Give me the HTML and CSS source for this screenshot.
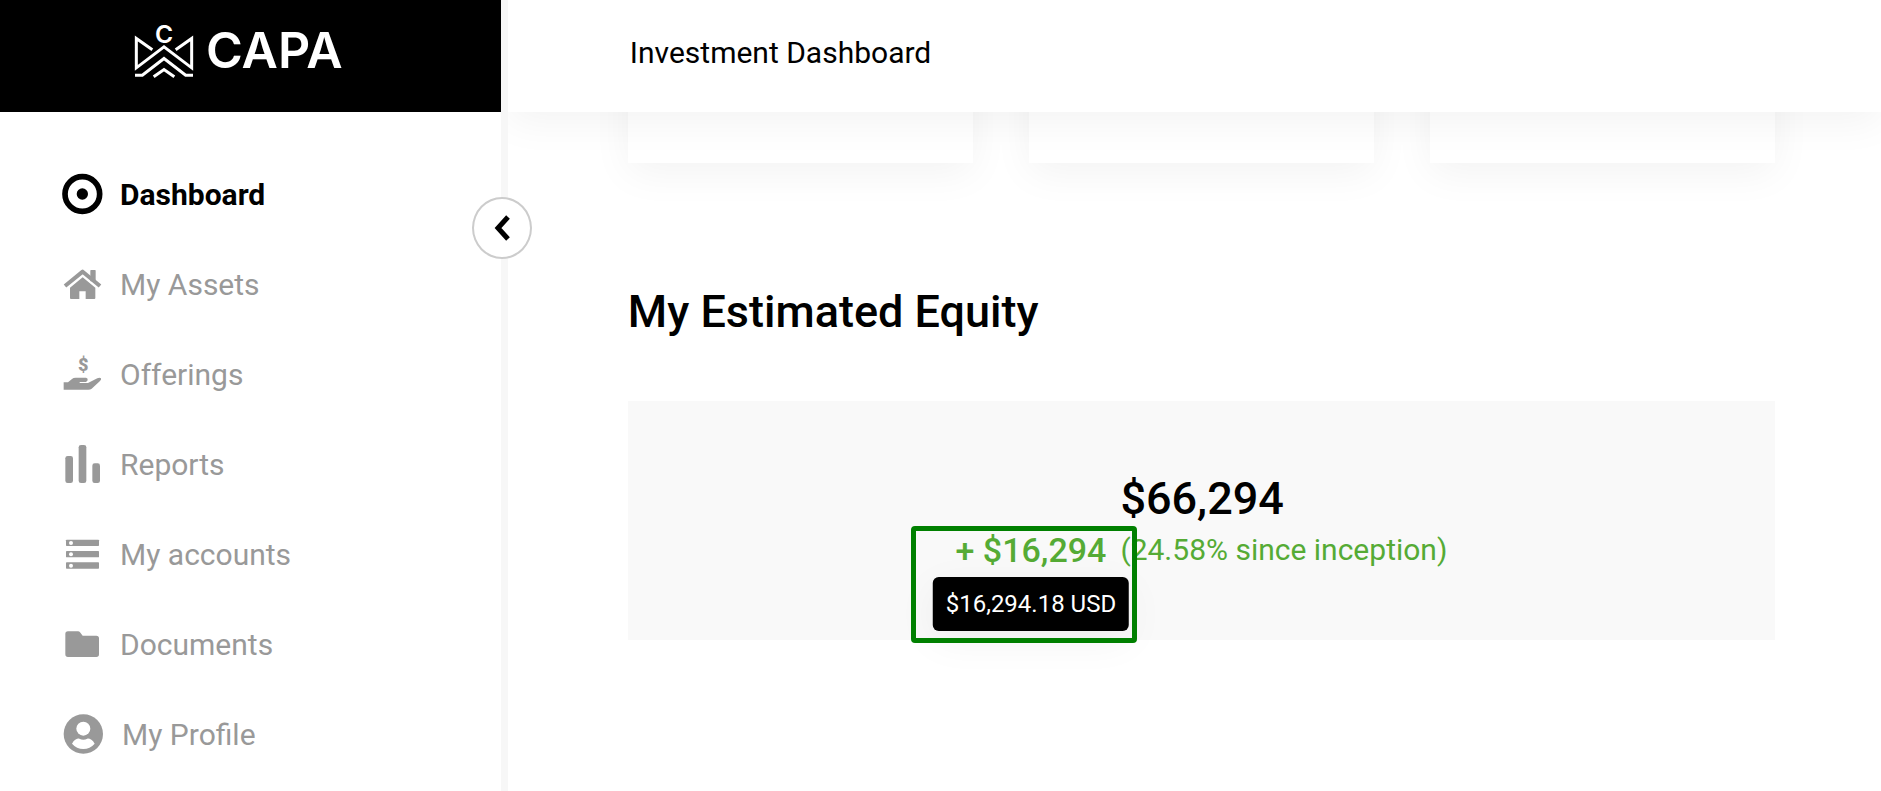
FILE: index.html
```html
<!DOCTYPE html>
<html lang="en">
<head>
    <meta charset="UTF-8">
    <meta name="viewport" content="width=device-width, initial-scale=1.0">
    <title>CAPA - Investment Dashboard</title>
    <link rel="stylesheet" href="styles.css">
</head>
<body>
    <aside class="sidebar">
        <a class="logo" href="#">
            <svg class="logo-mark" viewBox="0 0 174 158" aria-hidden="true">
                <text x="87" y="55" class="logo-initial">C</text>
                <path d="M52 77 L4 43 V131 L87 68 L170 131 V43 L122 77" />
                <path d="M0 153 H22 L87 103 L152 153 H174" />
                <path d="M56 158 L87 136 L118 158" />
            </svg>
            <span class="logo-text">CAPA</span>
        </a>

        <nav class="menu">
            <a class="menu-item active" href="#">
                <svg class="icon" viewBox="0 0 120 120">
                    <circle cx="61" cy="60" r="52" fill="none" stroke="currentColor" stroke-width="17" />
                    <circle cx="61" cy="60" r="17" />
                </svg>
                Dashboard
            </a>
            <a class="menu-item" href="#">
                <svg class="icon" viewBox="0 0 120 120">
                    <path d="M9 66 L62 23 L114 66" fill="none" stroke="currentColor" stroke-width="12" stroke-linejoin="round" />
                    <path d="M24 71 L62 40 L100 71 V102 Q100 105 97 105 H71 V82 H52 V105 H27 Q24 105 24 102 Z" />
                    <rect x="85" y="18" width="16" height="34" rx="2" />
                </svg>
                My Assets
            </a>
            <a class="menu-item" href="#">
                <svg class="icon" viewBox="0 0 120 120">
                    <text x="64" y="52" class="dollar">$</text>
                    <path d="M5 85 H18 L30 75 Q34 71 41 71 H72 Q78 72 77 78 Q76 83 71 84 H53 V87 H78 L106 73 Q113 69 117 73 Q119 77 114 81 L89 104 Q85 107 79 107 H5 Z" />
                </svg>
                Offerings
            </a>
            <a class="menu-item" href="#">
                <svg class="icon" viewBox="0 0 120 120">
                    <rect x="10" y="36" width="23" height="81" rx="7" />
                    <rect x="50" y="3" width="23" height="114" rx="7" />
                    <rect x="91" y="58" width="23" height="59" rx="7" />
                </svg>
                Reports
            </a>
            <a class="menu-item" href="#">
                <svg class="icon" viewBox="0 0 120 120">
                    <rect x="12" y="17" width="99" height="19" rx="2" />
                    <rect x="12" y="51" width="99" height="19" rx="2" />
                    <rect x="12" y="85" width="99" height="19" rx="2" />
                    <circle cx="27" cy="27" r="6" fill="#fff" />
                    <circle cx="27" cy="61" r="6" fill="#fff" />
                    <circle cx="27" cy="95" r="6" fill="#fff" />
                </svg>
                My accounts
            </a>
            <a class="menu-item" href="#">
                <svg class="icon" viewBox="0 0 120 120">
                    <path d="M18 22 H48 Q52 22 54 25 L62 35 H103 Q111 35 111 43 V91 Q111 99 103 99 H18 Q10 99 10 91 V30 Q10 22 18 22 Z" />
                </svg>
                Documents
            </a>
            <a class="menu-item" href="#">
                <svg class="icon icon-profile" viewBox="0 0 126 120">
                    <circle cx="64" cy="60" r="59" />
                    <circle cx="64" cy="44" r="21" fill="#fff" />
                    <path d="M30 89 C36 77 46 73 52 74 Q64 80 76 74 C82 73 92 77 98 89 Q84 105 64 105 Q44 105 30 89 Z" fill="#fff" />
                </svg>
                My Profile
            </a>
        </nav>

        <button class="collapse" type="button" aria-label="Collapse menu">
            <svg viewBox="0 0 16 26"><path d="M14 2 L4 13 L14 24" /></svg>
        </button>
    </aside>

    <div class="page">
        <header class="topbar">Investment Dashboard</header>

        <main class="content">
            <div class="cards">
                <div class="card"></div>
                <div class="card"></div>
                <div class="card"></div>
            </div>

            <h2>My Estimated Equity</h2>

            <section class="equity">
                <div class="total">$66,294</div>
                <div class="gain">
                    + $16,294
                    <span class="tooltip" role="tooltip">$16,294.18 USD</span>
                    <span class="highlight"></span>
                </div>
                <div class="since">(24.58% since inception)</div>
            </section>
        </main>
    </div>
</body>
</html>
```
FILE: styles.css
```css
* {
    box-sizing: border-box;
}

body {
    font-family: Roboto, 'Liberation Sans', sans-serif;
    font-size: 30px;
    margin: 0;
    min-height: 100vh;
    display: flex;
    background: #fff;
    color: #000;
}

/* Sidebar */
.sidebar {
    position: relative;
    z-index: 3;
    width: 27%;
    flex-shrink: 0;
    background: #fff;
    border-right: 7px solid #f7f7f7;
}

.logo {
    display: flex;
    align-items: center;
    gap: 13px;
    height: 112px;
    padding: 0 0 12px 135px;
    background: #000;
    color: #fff;
    text-decoration: none;
}

.logo-mark {
    width: 58px;
    height: 53px;
    flex-shrink: 0;
    overflow: visible;
    fill: none;
    stroke: #fff;
    stroke-width: 9;
}

.logo-initial {
    font-family: Inter, sans-serif;
    font-size: 74px;
    font-weight: 600;
    text-anchor: middle;
    fill: #fff;
    stroke: none;
}

.logo-text {
    font-family: Inter, sans-serif;
    font-size: 50px;
    font-weight: 600;
    line-height: 54px;
}

.menu {
    padding-top: 37px;
}

.menu-item {
    display: flex;
    align-items: center;
    gap: 18px;
    height: 90px;
    padding-left: 62px;
    color: #999;
    text-decoration: none;
}

.menu-item.active {
    color: #000;
    font-weight: bold;
}

.icon {
    width: 40px;
    height: 40px;
    flex-shrink: 0;
    overflow: visible;
    fill: currentColor;
}

.icon-profile {
    width: 42px;
}

.dollar {
    font-size: 54px;
    font-weight: 900;
    text-anchor: middle;
}

.collapse {
    position: absolute;
    top: 197px;
    right: -31px;
    width: 60px;
    height: 62px;
    padding: 0;
    display: flex;
    align-items: center;
    justify-content: center;
    border: 2px solid #ccc;
    border-radius: 50%;
    background: #fff;
    cursor: pointer;
}

.collapse svg {
    width: 16px;
    height: 26px;
    fill: none;
    stroke: #000;
    stroke-width: 5;
}

/* Main area */
.page {
    flex: 1;
    min-width: 0;
}

.topbar {
    position: relative;
    z-index: 2;
    height: 112px;
    padding: 0 122px 8px;
    display: flex;
    align-items: center;
    background: #fff;
    box-shadow: 0 10px 40px rgba(0, 0, 0, 0.05);
}

.content {
    padding: 0 106px 60px 120px;
}

/* the row is scrolled partly under the top bar */
.cards {
    display: grid;
    grid-template-columns: repeat(3, 1fr);
    gap: 56px;
    margin-top: -60px;
}

.card {
    height: 111px;
    background: #fff;
    box-shadow: 0 10px 40px rgba(0, 0, 0, 0.05);
}

h2 {
    margin: 122px 0 62px;
    font-size: 45px;
    font-weight: 500;
    line-height: 54px;
}

.equity {
    display: grid;
    grid-template-columns: auto auto;
    justify-content: center;
    column-gap: 14px;
    padding: 71px 0 66px;
    background: #f9f9f9;
}

.total {
    grid-column: 2;
    font-size: 45px;
    font-weight: 500;
    line-height: 54px;
}

.gain {
    position: relative;
    font-size: 34px;
    font-weight: 500;
    line-height: 48px;
    color: #55ab35;
}

.since {
    line-height: 48px;
    color: #55ab35;
}

.tooltip {
    position: absolute;
    top: 51px;
    left: 50%;
    transform: translateX(-50%);
    padding: 0 13px;
    border-radius: 6px;
    background: #000;
    color: #fff;
    font-size: 24px;
    font-weight: normal;
    line-height: 54px;
    white-space: nowrap;
    box-shadow: 0 10px 40px rgba(0, 0, 0, 0.05);
}

.highlight {
    position: absolute;
    z-index: 1;
    top: 0;
    left: -45px;
    right: -31px;
    height: 117px;
    border: 5px solid #008000;
    border-radius: 4px;
}
```
